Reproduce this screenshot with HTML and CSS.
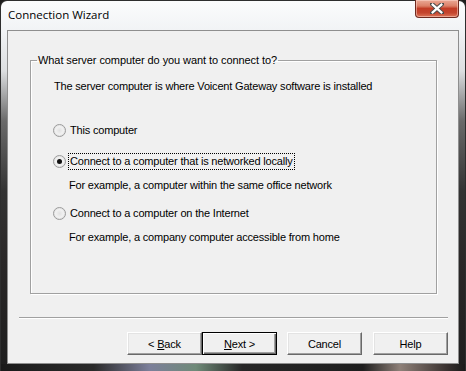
FILE: index.html
```html
<!DOCTYPE html>
<html>
<head>
<meta charset="utf-8">
<link rel="stylesheet" href="styles.css">
</head>
<body>
<div class="window">
  <div class="titlebar">
    <span class="title">Connection Wizard</span>
    <div class="close">
      <svg width="14" height="11" viewBox="0 0 14 11">
        <path d="M2 1 L12 10 M12 1 L2 10" stroke="#4a4a4a" stroke-width="4.2" stroke-linecap="square"/>
        <path d="M2.6 1.6 L11.4 9.4 M11.4 1.6 L2.6 9.4" stroke="#fff" stroke-width="2.2" stroke-linecap="square"/>
      </svg>
    </div>
  </div>
  <div class="client">
    <fieldset class="group">
      <legend>What server computer do you want to connect to?</legend>
      <p class="intro">The server computer is where Voicent Gateway software is installed</p>
      <div class="options">
        <div class="option opt1"><span class="radio"></span><span class="label">This computer</span></div>
        <div class="option opt2"><span class="radio checked"></span><span class="label focus">Connect to a computer that is networked locally</span></div>
        <p class="example ex1">For example, a computer within the same office network</p>
        <div class="option opt3"><span class="radio"></span><span class="label">Connect to a computer on the Internet</span></div>
        <p class="example ex2">For example, a company computer accessible from home</p>
      </div>
    </fieldset>
    <div class="sep"></div>
    <div class="buttons">
      <div class="btn back"><span>&lt; <u>B</u>ack</span></div>
      <div class="btn next default"><span><u>N</u>ext &gt;</span></div>
      <div class="btn cancel"><span>Cancel</span></div>
      <div class="btn help"><span>Help</span></div>
    </div>
  </div>
</div>
</body>
</html>
```

FILE: styles.css
```css
html, body {
  margin: 0;
  padding: 0;
  background: #1c1c1c;
}
.window {
  box-sizing: border-box;
  width: 466px;
  height: 371px;
  display: flex;
  flex-direction: column;
  border-radius: 7px 7px 0 0;
  border: 1px solid #2e2e2e;
  border-bottom: none;
  padding: 0 6px 7px 6px;
  background:
    linear-gradient(90deg, #1a1a1a 0, #2a2a2a 20%, #7c7f9a 32%, #6f8a78 42%, #262626 52%, #1e1e1e 78%, #8e8078 86%, #3a3230 96%, #1a1a1a 100%) left bottom / 100% 7px no-repeat,
    linear-gradient(180deg, #fbfcfd 0, #f1f3f5 30px, #dcdee0 70px, #6a6a6a 120px, #333 190px, #2a2828 260px, #1e1e1e 100%);
  font-family: "Liberation Sans", Arial, sans-serif;
  font-size: 11px;
  letter-spacing: -0.18px;
  color: #000;
}
.titlebar {
  height: 29px;
  display: flex;
  align-items: flex-start;
  justify-content: space-between;
  flex: none;
}
.title {
  font-family: "Open Sans", "Noto Sans", sans-serif;
  font-size: 11.5px;
  letter-spacing: 0;
  margin-top: 6px;
  margin-left: 1px;
  color: #000;
}
.close {
  width: 44px;
  height: 18px;
  margin-top: -1px;
  box-sizing: border-box;
  border: 1px solid #6e2a20;
  border-top: none;
  border-radius: 0 0 4px 4px;
  background: linear-gradient(180deg, #eaa896 0, #dc8068 35%, #c23c26 50%, #c4452e 75%, #dc7458 100%);
  box-shadow: inset 0 0 0 1px rgba(255,220,210,0.5);
  display: flex;
  align-items: center;
  justify-content: center;
}
.client {
  flex: 1;
  background: #f0f0f0;
  border: 1px solid #8e8e8e;
  display: flex;
  flex-direction: column;
}
.group {
  box-sizing: border-box;
  margin: 23px 0 0 22px;
  padding: 0;
  width: 407px;
  height: 240px;
  border: 1px solid #a0a0a0;
  box-shadow: inset 1px 1px 0 #fff, 1px 1px 0 #fff;
  min-width: 0;
}
.group legend {
  padding: 0 1px;
  margin-left: 6px;
  line-height: 13px;
  letter-spacing: -0.08px;
}
.intro {
  margin: 13px 0 0 23px;
  line-height: 13px;
}
.options {
  margin-left: 22px;
  display: flex;
  flex-direction: column;
}
.option {
  display: flex;
  align-items: center;
  height: 17px;
}
.opt1 { margin-top: 29px; }
.opt2 { margin-top: 14px; }
.opt3 { margin-top: 13px; }
.example {
  margin: 0 0 0 16px;
  line-height: 13px;
}
.ex1 { margin-top: 9px; }
.ex2 { margin-top: 9px; }
.radio {
  box-sizing: border-box;
  width: 13px;
  height: 13px;
  border-radius: 50%;
  border: 1px solid #9a9a9a;
  background: radial-gradient(circle at 50% 50%, #e2e2e2 0, #f0f0f0 45%, #fcfcfc 100%);
  box-shadow: inset 0 0 0 1px #e4e4e4;
  margin-right: 3px;
  display: flex;
  align-items: center;
  justify-content: center;
  flex: none;
}
.radio.checked::after {
  content: "";
  width: 5px;
  height: 5px;
  border-radius: 50%;
  background: #111;
}
.label {
  line-height: 13px;
  padding: 1px 1px;
}
.label.focus {
  outline: 1px dotted #000;
  outline-offset: 0;
}
.sep {
  margin: 23px 10px 0 11px;
  height: 1px;
  background: #a0a0a0;
  border-bottom: 1px solid #fff;
}
.buttons {
  display: flex;
  justify-content: flex-end;
  margin: 13px 10px 0 0;
}
.btn {
  box-sizing: border-box;
  width: 75px;
  height: 23px;
  display: flex;
  align-items: center;
  justify-content: center;
  background: #f0f0f0;
  border-top: 1px solid #fff;
  border-left: 1px solid #fff;
  border-right: 1px solid #696969;
  border-bottom: 1px solid #696969;
  box-shadow: inset -1px -1px 0 #a0a0a0, inset 1px 1px 0 #e3e3e3;
}
.btn.default {
  border: 1px solid #000;
  box-shadow: inset 1px 1px 0 #fff, inset -1px -1px 0 #696969, inset -2px -2px 0 #a0a0a0;
}
.btn.cancel { margin-left: 10px; }
.btn.help { margin-left: 11px; }
```
